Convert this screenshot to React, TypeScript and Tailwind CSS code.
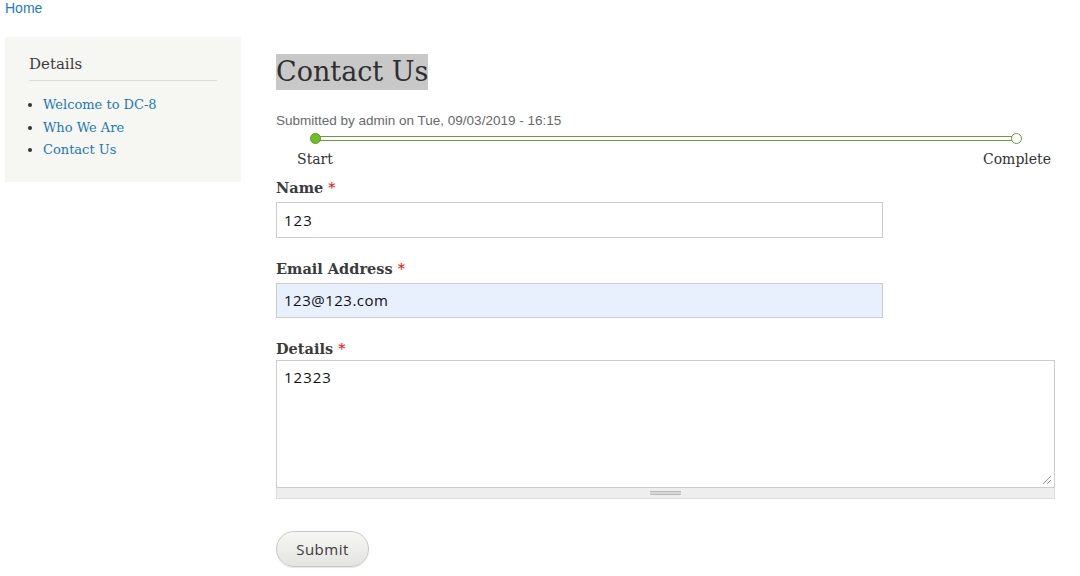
import React from "react";

const SERIF = "font-['DejaVu_Serif',Georgia,serif]";
const SANS = "font-['Liberation_Sans',Arial,sans-serif]";
const INPUT_FONT = "font-['Open_Sans','DejaVu_Sans',sans-serif]";

const LINKS = ["Welcome to DC-8", "Who We Are", "Contact Us"];

function Label({ text }: { text: string }) {
  return (
    <div className={`${SERIF} text-[14.5px] font-bold leading-[20px] text-[#3b3b3b]`}>
      {text} <span className="text-[#e00] font-normal">*</span>
    </div>
  );
}

function Progress() {
  return (
    <div className="relative h-[49px] ml-[39px] mr-[38px]">
      <div className="absolute left-0 right-0 top-[7px] h-[5px] border border-[#6b9a3a] bg-white" />
      <div className="absolute left-[-5px] top-[4px] h-[11px] w-[11px] rounded-full border border-[#5c9a1c] bg-[#6cc024]" />
      <div className="absolute right-[-5px] top-[4px] h-[11px] w-[11px] rounded-full border border-[#6b9a3a] bg-white" />
      <span className={`${SERIF} absolute left-0 top-[20px] -translate-x-1/2 text-[14px] text-[#333]`}>Start</span>
      <span className={`${SERIF} absolute right-0 top-[20px] translate-x-1/2 text-[14px] text-[#333]`}>Complete</span>
    </div>
  );
}

export default function App() {
  return (
    <div className="min-h-[576px] bg-white">
      <div className={`${SANS} pl-[5px] text-[14px] leading-[16px] text-[#1a7dc3]`}>Home</div>

      <div className="mt-[21px] flex items-start">
        <aside className="ml-[5px] w-[236px] shrink-0 bg-[#f6f6f2] px-[24px] pt-[16px] pb-[20px]">
          <h2 className={`${SERIF} text-[15px] leading-[22px] text-[#3b3b3b] pb-[5px] border-b border-[#dcdcd6]`}>
            Details
          </h2>
          <ul className={`${SERIF} mt-[13px] list-disc pl-[14px] text-[13px] leading-[22.5px] text-[#1b79b8] marker:text-[#333]`}>
            {LINKS.map((l) => (
              <li key={l}>{l}</li>
            ))}
          </ul>
        </aside>

        <main className="ml-[35px] w-[779px] pt-[17px]">
          <h1 className={`${SERIF} inline-block bg-[#c8c8c8] text-[27px] leading-[36px] text-[#2f2f2f]`}>
            Contact Us
          </h1>
          <div className={`${SANS} mt-[23px] text-[13.5px] leading-[16px] text-[#68696b]`}>
            Submitted by admin on Tue, 09/03/2019 - 16:15
          </div>

          <Progress />

          <Label text="Name" />
          <div className={`${INPUT_FONT} mt-[4px] flex h-[36px] w-[607px] items-center border border-[#ccc] bg-white px-[7px] text-[15px] tracking-[1px] text-[#111]`}>
            123
          </div>

          <div className="mt-[21px]">
            <Label text="Email Address" />
          </div>
          <div className={`${INPUT_FONT} mt-[4px] flex h-[35px] w-[607px] items-center border border-[#ccc] bg-[#e8f0fe] px-[7px] text-[15px] tracking-[0.5px] text-[#111]`}>
            123@123.com
          </div>

          <div className="mt-[21px]">
            <Label text="Details" />
          </div>
          <div className="mt-[1px] w-[779px]">
            <div className={`${INPUT_FONT} relative h-[128px] border border-[#ccc] bg-white px-[7px] pt-[5px] text-[15px] tracking-[1px] text-[#111]`}>
              12323
              <svg className="absolute bottom-[2px] right-[2px]" width="10" height="10" viewBox="0 0 10 10">
                <path d="M9 1 L1 9 M9 5 L5 9" stroke="#999" strokeWidth="1" />
              </svg>
            </div>
            <div className="flex h-[11px] items-center justify-center border border-t-0 border-[#ddd] bg-[#eee]">
              <div className="h-[4px] w-[31px] border-y border-[#bbb] bg-[#d8d8d8]" />
            </div>
          </div>

          <button className={`${INPUT_FONT} mt-[32px] h-[36px] w-[93px] rounded-full border border-[#c8c8c8] bg-gradient-to-b from-[#f6f6f3] to-[#e4e4e1] text-[15px] tracking-[0.5px] text-[#3a3a3a] shadow-[0_1px_1px_rgba(0,0,0,0.1)]`}>
            Submit
          </button>
        </main>
      </div>
    </div>
  );
}
